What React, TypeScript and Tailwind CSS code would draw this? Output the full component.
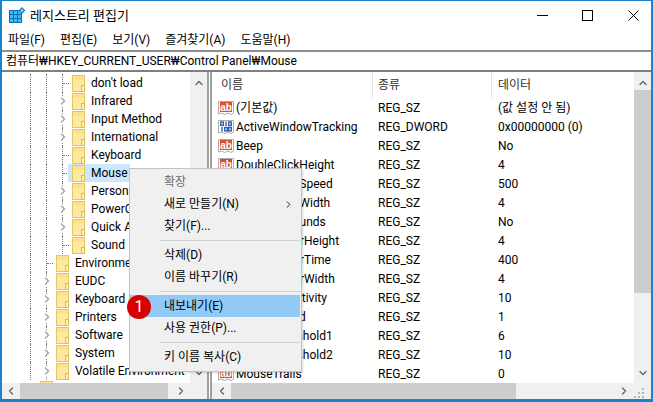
import { ChevronRight, ChevronLeft, ChevronUp, ChevronDown } from "lucide-react";

type TreeItem = {
  label: string;
  level: 1 | 2;
  expandable?: boolean;
  selected?: boolean;
};

const treeItems: TreeItem[] = [
  { label: "don't load", level: 2 },
  { label: "Infrared", level: 2, expandable: true },
  { label: "Input Method", level: 2, expandable: true },
  { label: "International", level: 2, expandable: true },
  { label: "Keyboard", level: 2 },
  { label: "Mouse", level: 2, selected: true },
  { label: "Personalization", level: 2, expandable: true },
  { label: "PowerCfg", level: 2, expandable: true },
  { label: "Quick Actions", level: 2, expandable: true },
  { label: "Sound", level: 2 },
  { label: "Environment", level: 1 },
  { label: "EUDC", level: 1, expandable: true },
  { label: "Keyboard Layout", level: 1, expandable: true },
  { label: "Printers", level: 1, expandable: true },
  { label: "Software", level: 1, expandable: true },
  { label: "System", level: 1, expandable: true },
  { label: "Volatile Environment", level: 1, expandable: true },
];

const values: { name: string; type: string; data: string; binary?: boolean }[] = [
  { name: "(기본값)", type: "REG_SZ", data: "(값 설정 안 됨)" },
  { name: "ActiveWindowTracking", type: "REG_DWORD", data: "0x00000000 (0)", binary: true },
  { name: "Beep", type: "REG_SZ", data: "No" },
  { name: "DoubleClickHeight", type: "REG_SZ", data: "4" },
  { name: "DoubleClickSpeed", type: "REG_SZ", data: "500" },
  { name: "DoubleClickWidth", type: "REG_SZ", data: "4" },
  { name: "ExtendedSounds", type: "REG_SZ", data: "No" },
  { name: "MouseHoverHeight", type: "REG_SZ", data: "4" },
  { name: "MouseHoverTime", type: "REG_SZ", data: "400" },
  { name: "MouseHoverWidth", type: "REG_SZ", data: "4" },
  { name: "MouseSensitivity", type: "REG_SZ", data: "10" },
  { name: "MouseSpeed", type: "REG_SZ", data: "1" },
  { name: "MouseThreshold1", type: "REG_SZ", data: "6" },
  { name: "MouseThreshold2", type: "REG_SZ", data: "10" },
  { name: "MouseTrails", type: "REG_SZ", data: "0" },
];

const menus = ["파일(F)", "편집(E)", "보기(V)", "즐겨찾기(A)", "도움말(H)"];

function Folder() {
  return (
    <svg width="13" height="17" viewBox="0 0 13 17" className="shrink-0">
      <rect x="0.5" y="0.5" width="12" height="16" fill="#fde99f" stroke="#e8c564" />
      <rect x="1.5" y="1.5" width="10" height="3" fill="#ffdf80" />
      <rect x="9.5" y="10.5" width="3" height="6" fill="#fff1b8" stroke="#e5b942" />
    </svg>
  );
}

function RegIcon({ binary }: { binary?: boolean }) {
  return (
    <svg width="16" height="16" viewBox="0 0 16 16" className="shrink-0">
      <path d="M0.5 1.5h15v11.5l-2.5 1.5-3-1.5-3.5 1.5-3-1.5-3 1z" fill="#fff" stroke="#b0a9a5" />
      {binary ? (
        <g fill="none" stroke="#2f5fb8" strokeWidth="1.4">
          <rect x="2.7" y="3" width="2.6" height="3.4" />
          <path d="M8 2.5v4.4" />
          <rect x="10.7" y="3" width="2.6" height="3.4" />
          <path d="M4 8v4.4" />
          <rect x="6.7" y="8.5" width="2.6" height="3.4" />
          <rect x="10.7" y="8.5" width="2.6" height="3.4" />
        </g>
      ) : (
        <>
          <rect x="2" y="2" width="12" height="10" fill="#d9512c" />
          <text x="8" y="10.5" textAnchor="middle" fontSize="10" fontWeight="700" fill="#fff" fontFamily="Liberation Sans, sans-serif">
            ab
          </text>
        </>
      )}
    </svg>
  );
}

function TreeRow({ item }: { item: TreeItem }) {
  return (
    <div className="flex h-[18px] items-center">
      <span className="ml-[28px] h-full w-[16px] shrink-0 border-l border-dotted border-[#777]" />
      {item.level === 2 && <span className="h-full w-[16px] shrink-0 border-l border-dotted border-[#777]" />}
      <span className="flex h-full w-[10px] shrink-0 items-center border-l border-dotted border-[#777]">
        {item.expandable ? (
          <span className="-ml-[6px] flex h-[11px] w-[11px] items-center justify-center bg-white">
            <ChevronRight size={12} strokeWidth={3} className="shrink-0 text-[#a6a6a6]" />
          </span>
        ) : (
          <span className="h-px w-[6px] border-t border-dotted border-[#777]" />
        )}
      </span>
      <span className={item.selected ? "-ml-[4px] flex h-full w-[62px] shrink-0 items-center gap-[6px] bg-[#cce8ff] pl-[4px]" : "flex h-full items-center gap-[6px]"}>
        <Folder />
        <span className="whitespace-nowrap">{item.label}</span>
      </span>
    </div>
  );
}

function MenuItem({ label, disabled, active, arrow }: { label: string; disabled?: boolean; active?: boolean; arrow?: boolean }) {
  return (
    <div className={`flex h-[22px] w-[170px] items-center justify-between pl-[34px] pr-[6px] ${disabled ? "text-[#6d6d6d]" : "text-black"} ${active ? "bg-[#91c9f7]" : ""}`}>
      <span>{label}</span>
      {arrow && <ChevronRight size={11} strokeWidth={1.8} />}
    </div>
  );
}

function MenuSeparator() {
  return <div className="my-[3px] ml-[30px] mr-[1px] h-px bg-[#d0d0d0]" />;
}

export default function App() {
  return (
    <div className="relative flex h-[402px] w-[653px] flex-col overflow-hidden border-x-2 border-t border-b-[3px] border-[#1b82cf] bg-white font-['Roboto','Noto_Sans_CJK_KR',sans-serif] text-[12px] leading-none text-black">
      {/* 제목 표시줄 */}
      <div className="flex h-[29px] shrink-0 items-center pl-[7px]">
        <svg width="17" height="17" viewBox="0 0 17 17" className="shrink-0">
          <rect x="0" y="3" width="13" height="13" fill="#0c6fb3" />
          {[1, 5, 9].flatMap((x) =>
            [4, 8, 12].map((y) => <rect key={`${x}-${y}`} x={x} y={y} width="3" height="3" fill="#38bdf5" />)
          )}
          <path d="M13 0l3.5 3.5L13 7 9.5 3.5z" fill="#1f8fd1" />
          <rect x="12" y="2.5" width="2" height="2" fill="#a8e4fb" />
        </svg>
        <span className="ml-[4px] text-[13px]">레지스트리 편집기</span>
        <div className="ml-auto flex items-center pr-[12px]">
          <span className="h-px w-[11px] bg-black" />
          <span className="ml-[34px] h-[11px] w-[11px] border border-black" />
          <svg width="11" height="11" viewBox="0 0 11 11" className="ml-[35px]">
            <path d="M0.5 0.5l10 10M10.5 0.5l-10 10" stroke="#000" fill="none" />
          </svg>
        </div>
      </div>

      {/* 메뉴 */}
      <div className="flex h-[20px] shrink-0 items-center gap-[15px] pl-[6px]">
        {menus.map((m) => (
          <span key={m}>{m}</span>
        ))}
      </div>

      {/* 주소 표시줄 */}
      <div className="flex h-[22px] shrink-0 items-center border-y-2 border-t-[#8e8e8e] border-b-[#808080] bg-white pl-[4px]">
        컴퓨터₩HKEY_CURRENT_USER₩Control Panel₩Mouse
      </div>

      <div className="flex min-h-0 flex-1">
        {/* 트리 */}
        <div className="flex w-[205px] shrink-0 flex-col">
          <div className="flex min-h-0 flex-1">
            <div className="min-w-0 flex-1 overflow-hidden pt-[2px]">
              {treeItems.map((item) => (
                <TreeRow key={item.label + item.level} item={item} />
              ))}
              <div className="ml-[38px] mt-px">
                <Folder />
              </div>
            </div>
            <div className="flex w-[17px] shrink-0 flex-col items-center bg-[#f0f0f0]">
              <ChevronUp size={12} strokeWidth={2.4} className="mt-[5px] text-[#606060]" />
              <ChevronDown size={12} strokeWidth={2.4} className="mb-[4px] mt-auto text-[#606060]" />
            </div>
          </div>
          <div className="flex h-[16px] shrink-0 items-center bg-[#f0f0f0]">
            <ChevronLeft size={12} strokeWidth={2.4} className="ml-[3px] text-[#606060]" />
            <div className="ml-[3px] h-full w-[148px] bg-[#cdcdcd]" />
            <ChevronRight size={12} strokeWidth={2.4} className="ml-auto mr-[20px] text-[#606060]" />
          </div>
        </div>

        {/* 분할선 */}
        <div className="w-[5px] shrink-0 border-x-2 border-[#a0a0a0] bg-white" />

        {/* 값 목록 */}
        <div className="flex min-w-0 flex-1 flex-col">
          <div className="flex min-h-0 flex-1">
            <div className="min-w-0 flex-1 overflow-hidden">
              <div className="flex h-[26px] items-center">
                <span className="w-[160px] pl-[9px] text-[#303030]">이름</span>
                <span className="h-full w-[119px] border-l border-[#e5e5e5] pl-[5px] leading-[26px] text-[#303030]">종류</span>
                <span className="h-full border-l border-[#e5e5e5] pl-[6px] leading-[26px] text-[#303030]">데이터</span>
              </div>
              {values.map((v) => (
                <div key={v.name} className="flex h-[19px] items-center">
                  <span className="flex w-[160px] items-center gap-[2px] whitespace-nowrap pl-[6px]">
                    <RegIcon binary={v.binary} />
                    {v.name}
                  </span>
                  <span className="w-[120px] pl-[6px]">{v.type}</span>
                  <span className="pl-[6px]">{v.data}</span>
                </div>
              ))}
            </div>
            <div className="flex w-[17px] shrink-0 flex-col items-center bg-[#f0f0f0]">
              <div className="flex h-[18px] shrink-0 items-center pt-[4px]">
                <ChevronUp size={12} strokeWidth={2.4} className="text-[#606060]" />
              </div>
              <div className="h-[203px] w-full bg-[#cdcdcd]" />
              <ChevronDown size={12} strokeWidth={2.4} className="mb-[4px] mt-auto text-[#606060]" />
            </div>
          </div>
          <div className="flex h-[16px] shrink-0 items-center bg-[#f0f0f0]">
            <ChevronLeft size={12} strokeWidth={2.4} className="ml-[4px] text-[#606060]" />
            <div className="ml-[3px] h-full w-[285px] bg-[#cdcdcd]" />
            <ChevronRight size={12} strokeWidth={2.4} className="ml-auto mr-[4px] text-[#606060]" />
            <svg width="11" height="11" viewBox="0 0 11 11" className="mr-[6px] self-end">
              <g fill="#b5b5b5">
                <rect x="8" y="0" width="2" height="2" />
                <rect x="4" y="4" width="2" height="2" />
                <rect x="8" y="4" width="2" height="2" />
                <rect x="0" y="8" width="2" height="2" />
                <rect x="4" y="8" width="2" height="2" />
                <rect x="8" y="8" width="2" height="2" />
              </g>
            </svg>
          </div>
        </div>
      </div>

      {/* 컨텍스트 메뉴 */}
      <div className="absolute left-[127px] top-[167px] w-[173px] border border-[#c4c4c4] bg-[#f0f0f0] pb-[3px] pt-[2px] shadow-[1px_1px_2px_rgba(0,0,0,0.15)]">
        <MenuItem label="확장" disabled />
        <MenuItem label="새로 만들기(N)" arrow />
        <MenuItem label="찾기(F)..." />
        <MenuSeparator />
        <MenuItem label="삭제(D)" />
        <MenuItem label="이름 바꾸기(R)" />
        <MenuSeparator />
        <MenuItem label="내보내기(E)" active />
        <MenuItem label="사용 권한(P)..." />
        <MenuSeparator />
        <MenuItem label="키 이름 복사(C)" />
      </div>

      {/* 번호 표시 */}
      <div className="absolute left-[125px] top-[294px] flex h-[24px] w-[24px] items-center justify-center rounded-full bg-[#d90000] text-[16px] text-white">
        1
      </div>
    </div>
  );
}
